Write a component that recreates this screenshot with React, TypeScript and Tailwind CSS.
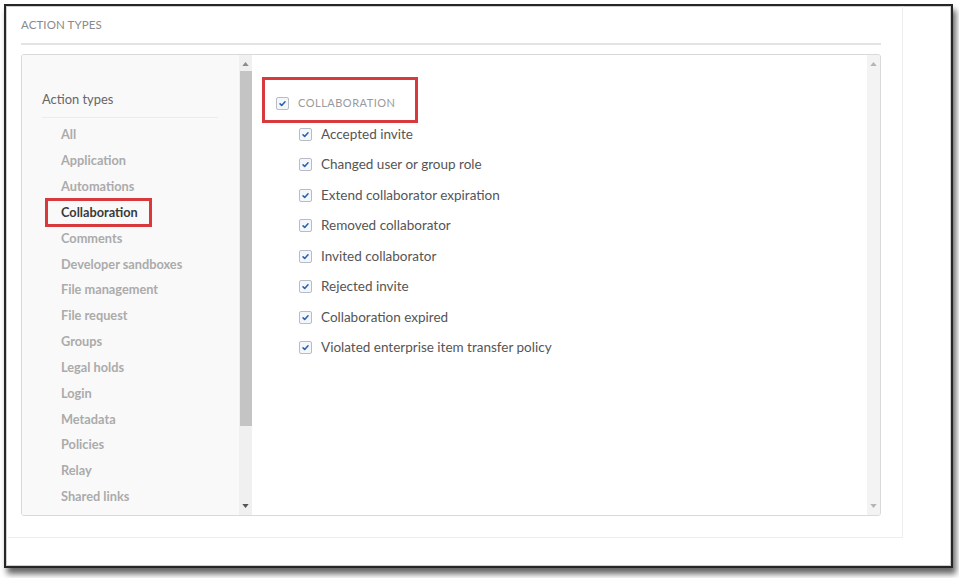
import React from 'react';

const actionTypes = [
    'All',
    'Application',
    'Automations',
    'Collaboration',
    'Comments',
    'Developer sandboxes',
    'File management',
    'File request',
    'Groups',
    'Legal holds',
    'Login',
    'Metadata',
    'Policies',
    'Relay',
    'Shared links',
];

const collaborationEvents = [
    'Accepted invite',
    'Changed user or group role',
    'Extend collaborator expiration',
    'Removed collaborator',
    'Invited collaborator',
    'Rejected invite',
    'Collaboration expired',
    'Violated enterprise item transfer policy',
];

const CheckBox = () => (
    <span className="flex h-[13px] w-[13px] shrink-0 items-center justify-center rounded-[2px] border border-[#b8bcc6] bg-[#f3f6fb]">
        <svg viewBox="0 0 10 10" className="h-[9px] w-[9px]">
            <path
                d="M2.3 5.4 4.1 7.1 7.8 3"
                fill="none"
                stroke="#2a5fae"
                strokeWidth="1.7"
                strokeLinecap="round"
                strokeLinejoin="round"
            />
        </svg>
    </span>
);

const Arrow = ({ up, color }: { up?: boolean; color: string }) => (
    <svg viewBox="0 0 8 5" className="h-[4px] w-[7px]">
        <path d={up ? 'M0 5 4 0 8 5Z' : 'M0 0 8 0 4 5Z'} fill={color} />
    </svg>
);

const App = () => {
    return (
        <div className="h-[578px] w-[959px] overflow-hidden bg-white font-['Lato','Liberation_Sans',sans-serif]">
            {/* Screenshot frame */}
            <div className="ml-[4px] mt-[4px] h-[564px] w-[949px] border-2 border-[#262626] bg-white shadow-[inset_0_0_0_1px_#cfcfcf,3px_6px_6px_rgba(0,0,0,0.6)]">
                <div className="ml-[2px] h-[532px] w-[895px] border-b border-r border-[#ededed] pl-[13px]">
                    {/* Section title */}
                    <div className="flex h-[37px] items-center pt-[1px] text-[11.5px] tracking-[0.1px] text-[#8a8a8a]">
                        ACTION TYPES
                    </div>
                    <div className="h-[2px] w-[860px] bg-[#e3e3e3]" />

                    {/* Picker box */}
                    <div className="mt-[9px] flex h-[462px] w-[860px] overflow-hidden rounded-[3px] border border-[#d9d9d9]">
                        {/* Sidebar */}
                        <aside className="w-[217px] bg-[#f9f9f9] pl-[20px] pt-[36px]">
                            <h3 className="text-[12.9px] leading-[16px] text-[#666]">
                                Action types
                            </h3>
                            <div className="mt-[10px] h-px w-[176px] bg-[#ececec]" />
                            <ul className="mt-[4px] pl-[19px]">
                                {actionTypes.map(item => (
                                    <li
                                        key={item}
                                        className={`relative flex h-[25.85px] items-center text-[12.75px] font-bold ${
                                            item === 'Collaboration'
                                                ? 'text-[#3a3a3a]'
                                                : 'text-[#ababab]'
                                        }`}>
                                        {item}
                                        {item === 'Collaboration' && (
                                            <span className="absolute left-[-16px] top-[-2px] h-[29px] w-[107px] border-[3px] border-[#d7393d]" />
                                        )}
                                    </li>
                                ))}
                            </ul>
                        </aside>

                        {/* Sidebar scrollbar */}
                        <div className="flex w-[13px] flex-col bg-[#f0f0f0]">
                            <div className="flex h-[16px] items-center justify-center pt-[1px]">
                                <Arrow up color="#8c8c8c" />
                            </div>
                            <div className="ml-[1px] h-[355px] bg-[#c4c4c4]" />
                            <div className="flex flex-1 items-end justify-center pb-[7px]">
                                <Arrow color="#555" />
                            </div>
                        </div>

                        {/* Event list */}
                        <main className="flex-1 bg-white pt-[38px]">
                            <div className="relative ml-[24px] flex h-[20px] items-center gap-[9px]">
                                <CheckBox />
                                <span className="text-[11px] tracking-[0.5px] text-[#9a9a9a]">
                                    COLLABORATION
                                </span>
                                <span className="absolute left-[-14px] top-[-16px] h-[46px] w-[156px] border-[3px] border-[#d7393d]" />
                            </div>
                            <ul className="ml-[47px] mt-[5.75px]">
                                {collaborationEvents.map(event => (
                                    <li
                                        key={event}
                                        className="flex h-[30.5px] items-center gap-[9px] text-[13.5px] text-[#555]">
                                        <CheckBox />
                                        {event}
                                    </li>
                                ))}
                            </ul>
                        </main>

                        {/* Event list scrollbar */}
                        <div className="flex w-[13px] flex-col bg-[#f3f3f3]">
                            <div className="flex h-[16px] items-center justify-center pt-[1px]">
                                <Arrow up color="#b5b5b5" />
                            </div>
                            <div className="flex flex-1 items-end justify-center pb-[7px]">
                                <Arrow color="#b5b5b5" />
                            </div>
                        </div>
                    </div>
                </div>
            </div>
        </div>
    );
};

export default App;
